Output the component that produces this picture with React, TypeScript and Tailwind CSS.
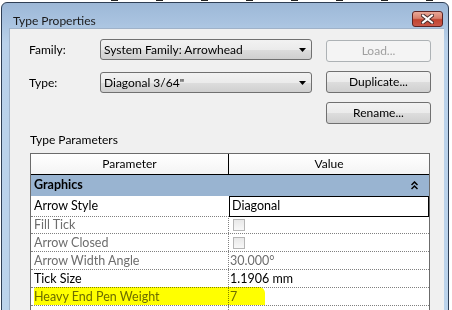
import React from "react";

const rows = [
	{ name: "Fill Tick", value: "box", dim: true },
	{ name: "Arrow Closed", value: "box", dim: true },
	{ name: "Arrow Width Angle", value: "30.000°", dim: true },
	{ name: "Tick Size", value: "1.1906 mm", dim: false },
];

const Combo = ({ text }: { text: string }) => (
	<div className="w-[212px] h-[21px] rounded-[3px] border border-[#707070] bg-[linear-gradient(#f2f2f2_0%,#ebebeb_50%,#dddddd_51%,#cfcfcf_100%)] flex items-center pl-[3px] pr-[5px] justify-between">
		<span className="text-[12px] text-black leading-none">{text}</span>
		<svg width="7" height="4" viewBox="0 0 7 4">
			<path d="M0 0 H7 L3.5 4 Z" fill="#000" />
		</svg>
	</div>
);

const Btn = ({ label, disabled }: { label: string; disabled?: boolean }) => (
	<div
		className={
			disabled
				? "w-[105px] h-[22px] rounded-[3px] border border-[#adb2b5] bg-[#f4f4f4] flex items-center justify-center text-[12px] text-[#a0a0a0]"
				: "w-[105px] h-[22px] rounded-[3px] border border-[#707070] bg-[linear-gradient(#f2f2f2_0%,#ebebeb_50%,#dddddd_51%,#cfcfcf_100%)] flex items-center justify-center text-[12px] text-black"
		}
	>
		{label}
	</div>
);

const Check = () => (
	<div className="w-[12px] h-[12px] ml-[3px] border border-[#b5b5b5] bg-[linear-gradient(#e9e9e9,#f8f8f8)]" />
);

export default function App() {
	return (
		<div className="w-[452px] h-[310px] overflow-hidden bg-white font-[family-name:Lato,'Liberation_Sans',sans-serif]">
			<div className="h-[2px] flex gap-[38px] pl-[111px]">
				{[0, 1, 2, 3, 4, 5, 6, 7].map((i) => (
					<span key={i} className="w-[7px] h-[1px] bg-[#222]" />
				))}
			</div>
			<div className="ml-[1px] w-[448px] h-[320px] rounded-t-[6px] border border-[#2f3f55] bg-[linear-gradient(#9db8d7_0px,#a9c3e0_20px,#b9d1ea_40px,#bcd4ec_100%)] flex flex-col">
				<div className="h-[28px] flex justify-between pl-[11px] pr-[5px]">
					<span className="pt-[10px] text-[12px] leading-[15px] text-[#1a1a1a]">Type Properties</span>
					<div className="mt-[8px] w-[31px] h-[16px] rounded-[3px] border border-[#5c2323] bg-[linear-gradient(#e9a898_0%,#d8806d_45%,#c2432f_55%,#c9584a_100%)] flex items-center justify-center">
						<svg width="13" height="10" viewBox="0 0 13 10">
							<path d="M2 1.5 L11 8.5 M11 1.5 L2 8.5" stroke="#4a2b2b" strokeWidth="4" strokeLinecap="square" />
							<path d="M2 1.5 L11 8.5 M11 1.5 L2 8.5" stroke="#ffffff" strokeWidth="2" strokeLinecap="square" />
						</svg>
					</div>
				</div>
				<div className="ml-[7px] mr-[4px] flex-1 bg-[#f0f0f0] border-l border-t border-[#9fb2c9] text-[12px] text-black">
					<div className="pt-[10px] pl-[19px] flex items-start">
						<span className="w-[71px] h-[21px] flex items-center">Family:</span>
						<Combo text="System Family: Arrowhead" />
						<div className="ml-[14px] mt-[1px]">
							<Btn label="Load..." disabled />
						</div>
					</div>
					<div className="mt-[9px] pl-[19px] flex items-start">
						<span className="w-[71px] h-[21px] mt-[1px] flex items-center">Type:</span>
						<div className="mt-[1px]">
							<Combo text={'Diagonal 3/64"'} />
						</div>
						<div className="ml-[14px]">
							<Btn label="Duplicate..." />
						</div>
					</div>
					<div className="mt-[9px] pl-[316px]">
						<Btn label="Rename..." />
					</div>
					<div className="mt-[8px] pl-[20px] leading-[15px]">Type Parameters</div>
					<div className="mt-[6px] ml-[20px] w-[400px] border-l border-t border-r border-[#6b6b6b] bg-white">
						<div className="h-[21px] grid grid-cols-[198px_1fr] border-b border-black bg-[linear-gradient(#ffffff,#f4f4f4)]">
							<div className="border-r border-black flex items-center justify-center">Parameter</div>
							<div className="flex items-center justify-center">Value</div>
						</div>
						<div className="h-[21px] bg-[#99b4d1] flex items-center justify-between pl-[3px] pr-[11px]">
							<span className="font-bold text-[12.5px]">Graphics</span>
							<svg width="7" height="9" viewBox="0 0 7 9">
								<path d="M0.5 4 L3.5 1 L6.5 4 M0.5 8 L3.5 5 L6.5 8" stroke="#000" strokeWidth="1.5" fill="none" />
							</svg>
						</div>
						<div className="h-[20px] grid grid-cols-[198px_1fr] text-[12.5px]">
							<div className="pl-[3px] flex items-center border-b border-dotted border-[#808080]">Arrow Style</div>
							<div className="border border-black pl-[2px] flex items-center">Diagonal</div>
						</div>
						{rows.map((r) => (
							<div key={r.name} className={"h-[18px] grid grid-cols-[198px_1fr] text-[12.5px] border-b border-dotted border-[#808080] " + (r.dim ? "text-[#6d6d6d]" : "text-black")}>
								<div className="pl-[3px] flex items-center border-r border-dotted border-[#808080]">{r.name}</div>
								<div className="pl-[1px] flex items-center">{r.value === "box" ? <Check /> : r.value}</div>
							</div>
						))}
						<div className="relative h-[18px] grid grid-cols-[198px_1fr] text-[12.5px] border-b border-dotted border-[#808080] text-[#6d6d6d]">
							<div className="pl-[3px] flex items-center border-r border-dotted border-[#808080]">Heavy End Pen Weight</div>
							<div className="pl-[1px] flex items-center">7</div>
							<span className="absolute left-[3px] top-[-1px] w-[231px] h-[18px] bg-[#ffff00] mix-blend-multiply rounded-tl-[3px] rounded-tr-[6px]" />
						</div>
						<div className="h-[18px] grid grid-cols-[198px_1fr]">
							<div className="border-r border-dotted border-[#808080]" />
						</div>
					</div>
				</div>
			</div>
		</div>
	);
}
